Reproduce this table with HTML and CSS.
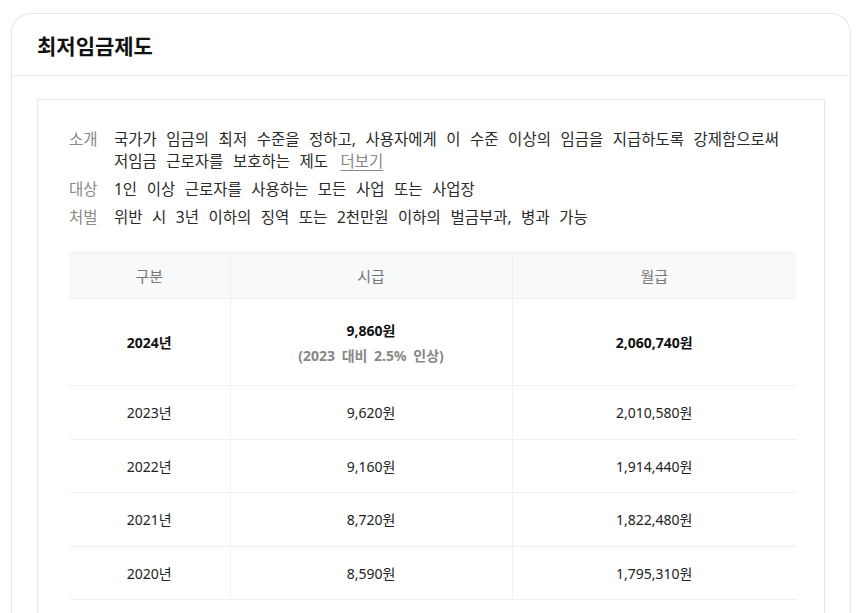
FILE: index.html
```html
<!DOCTYPE html>
<html lang="ko">
<head>
  <meta charset="UTF-8">
  <meta name="viewport" content="width=device-width, initial-scale=1.0">
  <title>최저임금제도</title>
  <link rel="stylesheet" href="styles.css">
</head>
<body>

  <div class="card">
    <div class="card-header">
      <h2>최저임금제도</h2>
    </div>

    <div class="card-body">
      <div class="box">
        <dl class="info">
          <div class="info-row">
            <dt>소개</dt>
            <dd>국가가 임금의 최저 수준을 정하고, 사용자에게 이 수준 이상의 임금을 지급하도록 강제함으로써<br>저임금 근로자를 보호하는 제도 <a href="#" class="more">더보기</a></dd>
          </div>
          <div class="info-row">
            <dt>대상</dt>
            <dd>1인 이상 근로자를 사용하는 모든 사업 또는 사업장</dd>
          </div>
          <div class="info-row">
            <dt>처벌</dt>
            <dd>위반 시 3년 이하의 징역 또는 2천만원 이하의 벌금부과, 병과 가능</dd>
          </div>
        </dl>

        <table class="wage-table">
          <colgroup>
            <col class="col-year">
            <col class="col-hour">
            <col>
          </colgroup>
          <thead>
            <tr>
              <th>구분</th>
              <th>시급</th>
              <th>월급</th>
            </tr>
          </thead>
          <tbody>
            <tr class="current">
              <td>2024년</td>
              <td>9,860원<span class="rate">(2023 대비 2.5% 인상)</span></td>
              <td>2,060,740원</td>
            </tr>
            <tr>
              <td>2023년</td>
              <td>9,620원</td>
              <td>2,010,580원</td>
            </tr>
            <tr>
              <td>2022년</td>
              <td>9,160원</td>
              <td>1,914,440원</td>
            </tr>
            <tr>
              <td>2021년</td>
              <td>8,720원</td>
              <td>1,822,480원</td>
            </tr>
            <tr>
              <td>2020년</td>
              <td>8,590원</td>
              <td>1,795,310원</td>
            </tr>
          </tbody>
        </table>
      </div>
    </div>
  </div>

</body>
</html>
```

FILE: styles.css
```css
body {
  font-family: "Noto Sans", "Noto Sans CJK KR", sans-serif;
  margin: 0;
  padding: 13px 10px 0 11px;
  background-color: #fff;
  color: #222;
}
.card {
  border: 1px solid #e6e6e8;
  border-bottom: none;
  border-radius: 20px 20px 0 0;
  height: 640px;
}
.card-header {
  height: 61px;
  padding: 0 25px;
  border-bottom: 1px solid #ececee;
  display: flex;
  align-items: center;
}
h2 {
  margin: 0;
  font-size: 21px;
  font-weight: bold;
  color: #111;
}
.card-body {
  padding: 23px 25px 0 25px;
}
.box {
  border: 1px solid #e5e7eb;
  border-bottom: none;
  padding: 28px 28px 0 31px;
  height: 600px;
}
.info {
  margin: 0 0 24px 0;
  font-size: 15.5px;
  line-height: 22px;
  word-spacing: 5.5px;
}
.info-row {
  display: flex;
  margin-bottom: 6px;
}
.info-row:last-child {
  margin-bottom: 0;
}
dt {
  width: 45px;
  flex: none;
  color: #888;
}
dd {
  margin: 0;
  color: #2a2a2a;
  white-space: nowrap;
}
.more {
  color: #888;
  margin-left: 3px;
  text-decoration: underline;
  text-underline-offset: 3px;
}
.wage-table {
  width: 100%;
  border-collapse: collapse;
  table-layout: fixed;
  font-size: 14px;
  text-align: center;
}
.col-year {
  width: 161px;
}
.col-hour {
  width: 282px;
}
.wage-table th {
  height: 45px;
  padding: 0;
  background-color: #f8f9fb;
  font-size: 15px;
  font-weight: normal;
  color: #777;
  border-top: 1px solid #eef0f3;
}
.wage-table td {
  height: 52.5px;
  padding: 0;
  color: #222;
  border-top: 1px solid #eef0f3;
  border-bottom: 1px solid #eef0f3;
}
.wage-table th + th,
.wage-table td + td {
  border-left: 1px solid #eef0f3;
}
.wage-table .current td {
  height: 86px;
  font-weight: bold;
  color: #111;
}
.rate {
  display: block;
  margin-top: 5px;
  color: #888;
  word-spacing: 3px;
}
```
